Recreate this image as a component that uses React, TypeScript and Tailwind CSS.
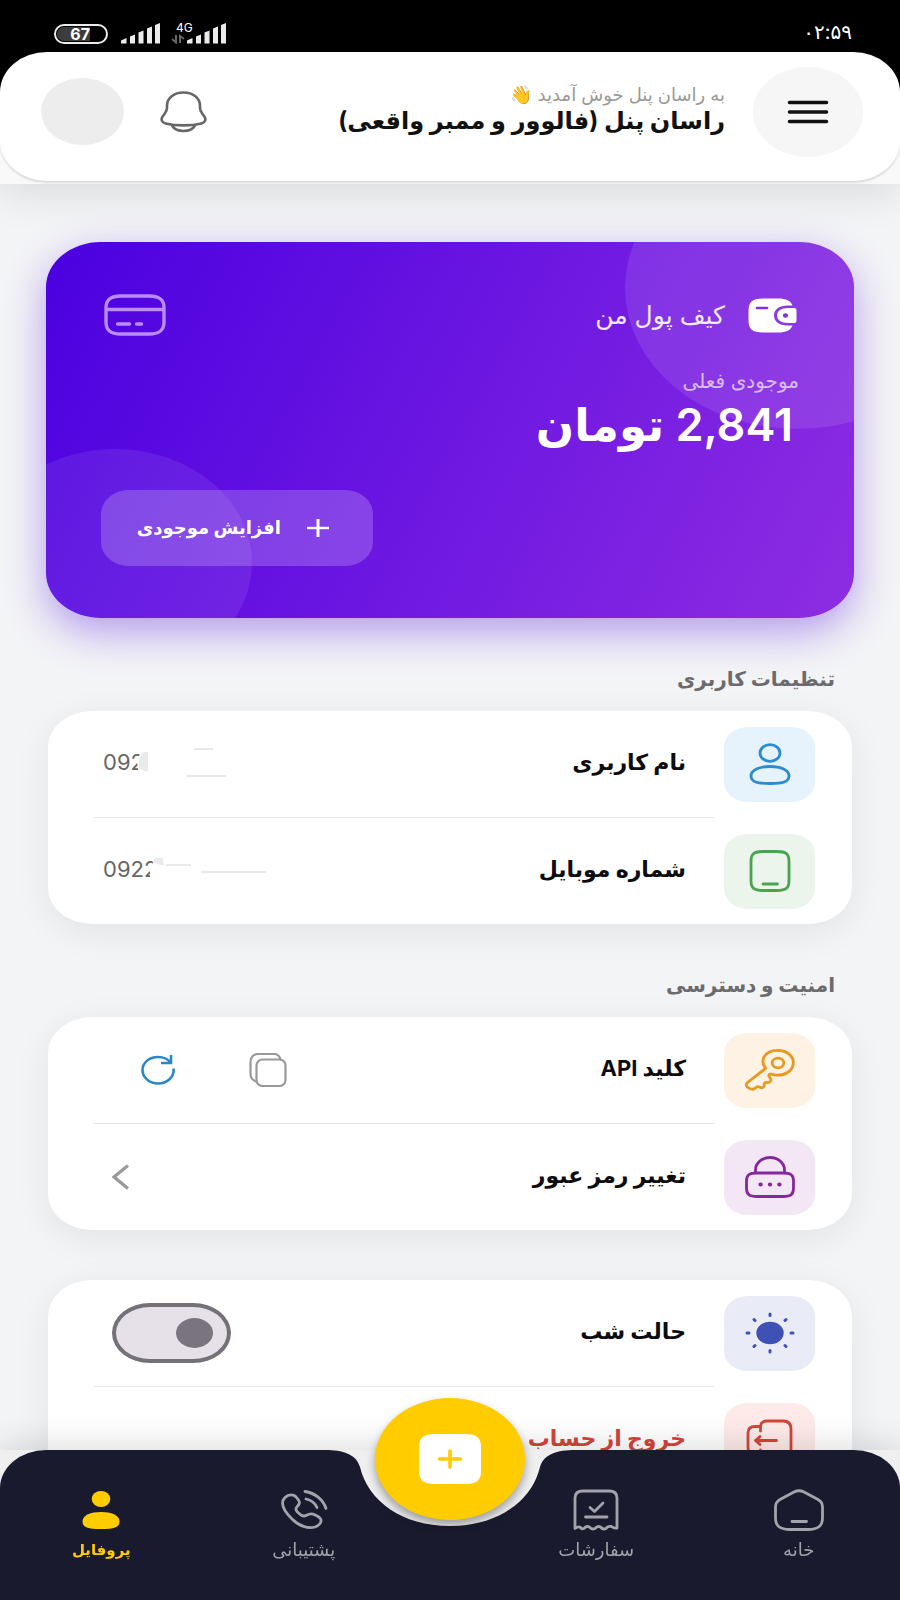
import type { ReactNode } from "react";

const stroke = {
  fill: "none",
  stroke: "currentColor",
  strokeLinecap: "round",
  strokeLinejoin: "round",
} as const;

function SignalBars() {
  return (
    <svg width="40" height="22" viewBox="0 0 40 22" fill="#ececec" aria-hidden="true">
      <path d="M0 18.500L5.500 16V21.500H0ZM9 14.500L14 12.500V21.500H9ZM17.500 10.500L22.500 8.500V21.500H17.500ZM26 6.500L31 4.500V21.500H26ZM34 3L39 1V21.500H34Z" />
    </svg>
  );
}

function StatusBar() {
  return (
    <div className="flex h-[52px] items-end justify-between bg-black px-[48px] pb-[8px] text-white" dir="ltr">
      <div className="flex items-end pl-[6px]">
        <div className="flex h-[20px] w-[54px] items-center rounded-full border-2 border-[#ececec] p-px text-base leading-4 font-bold">
          <span className="flex h-full w-[33px] items-center justify-end rounded-l-full bg-[#3c3c3c]">67</span>
        </div>
        <div className="pl-[13px]">
          <SignalBars />
        </div>
        <div className="ml-[10px] flex w-[16px] flex-col items-start">
          <span className="pl-[5px] text-xs leading-3">4G</span>
          <svg width="14" height="10" viewBox="0 0 14 10" fill="none" stroke="#666" strokeWidth="2" aria-hidden="true">
            <path d="M1 5L5 8.500V1M9 9V2L13 5" />
          </svg>
        </div>
        <SignalBars />
      </div>
      <div className="text-xl leading-6">۰۲:۵۹</div>
    </div>
  );
}

function Header() {
  return (
    <div className="bg-[linear-gradient(#000_50%,#f9f9f9_50%)] pb-[3px] shadow-[0_8px_40px_rgba(0,0,0,0.11)]">
      <header className="flex h-[129px] items-center rounded-[47px_/_40px] bg-white pr-[37px] pb-[10px] pl-[41px] shadow-[0_2px_2px_rgba(0,0,0,0.12)]">
        <button aria-label="منو" className="flex h-[90px] w-[110px] shrink-0 items-center justify-center rounded-[50%] bg-[#f6f6f6] text-[#111]">
          <svg width="42" height="24" viewBox="0 0 42 24" {...stroke} strokeWidth="3.6">
            <path d="M2.500 2.500H39.500M2.500 12H39.500M2.500 21.500H39.500" />
          </svg>
        </button>
        <div className="flex-1 pr-[28px] pb-[6px]">
          <p className="text-lg leading-6 text-[#999]">به راسان پنل خوش آمدید 👋</p>
          <h1 className="text-2xl leading-7 font-bold text-[#111]">راسان پنل (فالوور و ممبر واقعی)</h1>
        </div>
        <button aria-label="اعلان‌ها" className="text-[#666]">
          <svg width="47" height="43" viewBox="0 0 47 43" {...stroke} strokeWidth="2.6">
            <path d="M23.500 2.500C14 2.500 7 8 7 15.500V18C7 20.500 6 22 4.500 24L2.800 26.200C.5 29.200 1.800 32.600 5.500 33.500C16 36 31 36 41.500 33.500C45.200 32.600 46.500 29.200 44.200 26.200L42.500 24C41 22 40 20.500 40 18V15.500C40 8 33 2.500 23.500 2.500Z" />
            <path d="M12 35.500C14 39 19 41 23.500 41S33 39 35 35.500" />
          </svg>
        </button>
        <div className="mr-[36px] h-[67px] w-[83px] rounded-[50%] bg-[#ededed]" />
      </header>
    </div>
  );
}

function WalletCard() {
  return (
    <section className="relative mx-[46px] mt-[58px] rounded-[55px_/_45px] bg-[linear-gradient(118deg,#4a00e0,#8e2de2)] text-white shadow-[0_14px_40px_rgba(94,30,225,0.42)]">
      <div className="absolute inset-0 overflow-hidden rounded-[55px_/_45px]">
        <div className="absolute -top-[95px] -right-[115px] h-[282px] w-[344px] rounded-[50%] bg-white/10" />
        <div className="absolute -bottom-[59px] -left-[68px] h-[228px] w-[274px] rounded-[50%] bg-white/8" />
      </div>
      <div className="relative flex flex-col px-[55px] pt-[50px] pb-[52px]">
        <div className="flex h-[46px] items-center pr-[2px] pl-[3px]">
          <svg width="49" height="35" viewBox="0 0 49 35" aria-hidden="true">
            <path fill="#fff" d="M15 .5H30C38 .5 43 3 44.500 7.500H40C31 7.500 26 11.500 26 17.500S31 27.500 40 27.500H44.500C43 32 38 34.500 30 34.500H15C4 34.500 .5 31 .5 22V13C.5 4 4 .5 15 .5Z" />
            <path fill="#fff" d="M40 10H46C48 10 48.500 11 48.500 13V22C48.500 24 48 25 46 25H40C33 25 29 22 29 17.500S33 10 40 10Z" />
            <path stroke="#8232e2" strokeWidth="2.600" strokeLinecap="round" d="M9 10H19" />
            <ellipse cx="37.500" cy="17.500" rx="2.600" ry="2.200" fill="#8232e2" />
          </svg>
          <h2 className="flex-1 pr-[23px] text-[25px] leading-9 text-white/90">کیف پول من</h2>
          <svg width="62" height="42" viewBox="0 0 62 42" className="text-[#b98cff]" {...stroke} strokeWidth="3.400" aria-hidden="true">
            <path d="M17 2H45C56 2 60 6 60 14V28C60 36 56 40 45 40H17C6 40 2 36 2 28V14C2 6 6 2 17 2ZM2 15.500H60M13.500 30H25.500M32.500 30H37.500" />
          </svg>
        </div>
        <p className="mt-[29px] text-xl leading-7 text-white/65">موجودی فعلی</p>
        <p className="pr-[6px] text-[45px] leading-[60px] font-semibold">2,841 تومان</p>
        <button className="mt-[35px] flex h-[76px] w-[272px] items-center gap-[26px] self-end rounded-[28px_/_24px] bg-white/20 pr-[44px] text-lg font-bold">
          <svg width="22" height="18" viewBox="0 0 22 18" stroke="currentColor" aria-hidden="true">
            <path strokeWidth="2.400" d="M0 9H22" />
            <path strokeWidth="3" d="M11 0V18" />
          </svg>
          افزایش موجودی
        </button>
      </div>
    </section>
  );
}

function SectionTitle({ children }: { children: ReactNode }) {
  return <h2 className="mx-[65px] mt-[45px] mb-[16px] text-xl leading-8 font-bold text-[#6b6b6e]">{children}</h2>;
}

function Panel({ children, className = "" }: { children: ReactNode; className?: string }) {
  return (
    <section className={`mx-[48px] rounded-[44px_/_36px] bg-white shadow-[0_8px_36px_rgba(0,0,0,0.07)] ${className}`}>
      {children}
    </section>
  );
}

function Divider() {
  return <div className="mr-[138px] ml-[46px] h-px bg-[#e6e6e7]" />;
}

interface RowProps {
  icon: ReactNode;
  tile: string;
  label: string;
  labelColor?: string;
  children?: ReactNode;
}

function Row({ icon, tile, label, labelColor = "text-[#0c0c0e]", children }: RowProps) {
  return (
    <div className="flex h-[106px] items-center pr-[37px] pl-[55px]">
      <div className={`flex h-[75px] w-[91px] shrink-0 items-center justify-center rounded-[24px_/_20px] ${tile}`}>{icon}</div>
      <div className={`flex-1 pr-[38px] pb-[4px] text-[22px] leading-8 font-bold ${labelColor}`}>{label}</div>
      {children}
    </div>
  );
}

function UserIcon() {
  return (
    <svg width="42" height="42" viewBox="0 0 42 42" {...stroke} strokeWidth="2.800">
      <ellipse cx="21" cy="10" rx="10" ry="8.300" />
      <path d="M21 23.500C32 23.500 40 27 40 33C40 39 34 40.500 21 40.500S2 39 2 33C2 27 10 23.500 21 23.500Z" />
    </svg>
  );
}

function TabletIcon() {
  return (
    <svg width="42" height="42" viewBox="0 0 42 42" {...stroke} strokeWidth="2.800">
      <path d="M14 1.500H28C37 1.500 40 4 40 11V31C40 38 37 40.500 28 40.500H14C5 40.500 2 38 2 31V11C2 4 5 1.500 14 1.500ZM14 34H28.500" />
    </svg>
  );
}

function KeyIcon() {
  return (
    <svg width="50" height="42" viewBox="0 0 50 42" {...stroke} strokeWidth="2.800">
      <path d="M20.700 19.300C18 16 17 12 19 8C22 3 28 1.200 34 1.500C43 2 49 8 48.300 14.500C47.500 22 40 26.500 32 26.200C29.500 26.100 27.500 25.600 26 25.200C24 25 23.300 26.300 24.300 27.500L25.500 29.500C27 32 24.500 34 22 33.500C20 33.200 19 34.500 19.300 36C19.500 38.500 17 39.500 15 38.200C13 37 12 37.500 11 38.500C8.500 41 5.500 40.500 3 38.500C.8 37 .8 35 2.500 33.500Z" />
      <ellipse cx="33" cy="14" rx="5.800" ry="4.800" />
    </svg>
  );
}

function LockIcon() {
  return (
    <svg width="50" height="42" viewBox="0 0 50 42" {...stroke} strokeWidth="2.800">
      <path d="M10.500 16.500V14C10.500 7 17 1.500 25 1.500S39.500 7 39.500 14V16.500" />
      <path d="M12 17H38C46 17 48.500 19 48.500 25V32C48.500 38.500 46 40.500 38 40.500H12C4 40.500 1.500 38.500 1.500 32V25C1.500 19 4 17 12 17Z" />
      <path strokeWidth="4.200" d="M15.500 28.500H15.700M24.900 28.500H25.100M34.300 28.500H34.500" />
    </svg>
  );
}

function SunIcon() {
  return (
    <svg width="50" height="42" viewBox="0 0 50 42" {...stroke} strokeWidth="3">
      <ellipse cx="25" cy="21" rx="13.700" ry="11.300" fill="currentColor" stroke="none" />
      <path d="M25 2V3.500M25 38.500V40M2 21H4M46 21H48M9 7.500L10 8.500M40 33.500L41 34.500M41 7.500L40 8.500M10 33.500L9 34.500" />
    </svg>
  );
}

function LogoutIcon() {
  return (
    <svg width="50" height="42" viewBox="0 0 50 42" {...stroke} strokeWidth="2.800">
      <path d="M15.500 12V8C15.500 4 17.500 2 22 2H38C43 2 46 4.500 46 10V32C46 37 43 40 38 40H22C17.500 40 15.500 38 15.500 35V31M15.500 7.500H10C5 7.500 3 10 3 14V29C3 33 5 35 10 35H15.500" />
      <path d="M31.500 21.500H10.500M15 17.500L10.500 21.500L15 25.500" />
    </svg>
  );
}

function NavItem({ label, icon, active = false }: { label: string; icon: ReactNode; active?: boolean }) {
  return (
    <a href="#" className={`flex flex-1 flex-col items-center pt-[39px] leading-8 ${active ? "text-[15px] font-bold text-[#ffcc00]" : "text-lg text-[#a3a3ab]"}`}>
      {icon}
      <span className="mt-[3px]">{label}</span>
    </a>
  );
}

function BottomNav() {
  return (
    <nav className="fixed inset-x-0 bottom-0 h-[150px] bg-[#efefef] font-['DejaVu_Sans',sans-serif] shadow-[0_-6px_30px_rgba(0,0,0,0.13)]">
      <div className="absolute inset-0 flex">
        <div className="flex-1 rounded-tr-[46px_38px] bg-[#1a1a2e]" />
        <svg width="272" height="150" viewBox="0 0 272 150" className="-mx-px shrink-0" fill="#1a1a2e" aria-hidden="true">
          <path d="M0 0H11C29 0 42 4 46 17C54 51 88 76 136 76C184 76 218 51 226 17C230 4 243 0 261 0H272V150H0Z" />
        </svg>
        <div className="flex-1 rounded-tl-[46px_38px] bg-[#1a1a2e]" />
      </div>
      <div className="relative flex h-full">
        <NavItem
          label="خانه"
          icon={
            <svg width="50" height="42" viewBox="0 0 50 42" {...stroke} strokeWidth="2.800">
              <path d="M20 3Q25 .5 30 3L44 10.500Q48.500 13 48.500 18V29C48.500 37 44 40.500 34 40.500H16C6 40.500 1.500 37 1.500 29V18Q1.500 13 6 10.500ZM18 32.500H32.500" />
            </svg>
          }
        />
        <NavItem
          label="سفارشات"
          icon={
            <svg width="46" height="42" viewBox="0 0 46 42" {...stroke} strokeWidth="2.800">
              <path d="M10 2H36Q44 2 44 9V39Q41 39.500 38.500 37.500Q34.500 37 33 39.500Q30 41 27.500 38Q24.500 36.500 22 39.500Q18.500 41 16.500 38Q13 36.500 11 39.500Q8.500 40.500 7 38Q4.500 37.500 2 39.500V9Q2 2 10 2Z" />
              <path d="M17 18.500L21.500 22.500L30 14M12.500 28H34" />
            </svg>
          }
        />
        <div className="w-[90px] shrink-0" />
        <NavItem
          label="پشتیبانی"
          icon={
            <svg width="48" height="42" viewBox="0 0 48 42" {...stroke} strokeWidth="2.800">
              <path d="M5 8.500C8.500 5 14 5 16.500 8.500C18 10.500 19.500 12 19.500 13.500C19.500 15.500 18 16.500 16.800 18C15 20.500 16.500 22 18.500 24C21 26.500 23.500 27.800 26 26.500C28.500 25.200 31 24 34 25.500C37 27 40.500 28 41 31C41.300 33.500 39 36.500 35 38C28 40 19 37 12 30C4 22 -1 14.500 5 8.500Z" />
              <path d="M25 2.500C35 4 43 10.500 46 19.500M26 10C31 11 35 14 37 18.500" />
            </svg>
          }
        />
        <NavItem
          active
          label="پروفایل"
          icon={
            <svg width="38" height="42" viewBox="0 0 38 42" fill="currentColor">
              <ellipse cx="19" cy="10" rx="9.300" ry="8" />
              <path d="M19 23C29 23 37.500 26 37.500 32.500C37.500 38.500 32 40 19 40S.5 38.500 .5 32.500C.5 26 9 23 19 23Z" />
            </svg>
          }
        />
      </div>
      <div className="absolute -top-[52px] left-1/2 -ml-[75px]">
        <button aria-label="سفارش جدید" className="flex h-[122px] w-[150px] items-center justify-center rounded-[50%] bg-[#ffcc00] shadow-[0_5px_10px_rgba(0,0,0,0.35)]">
          <svg width="62" height="50" viewBox="0 0 62 50">
            <path fill="#fff" d="M16 0H46C58 0 62 4 62 13V37C62 46 58 50 46 50H16C4 50 0 46 0 37V13C0 4 4 0 16 0Z" />
            <path stroke="#ffcc00" strokeWidth="3.600" strokeLinecap="round" d="M20.500 25H41.500M31 17V33" />
          </svg>
        </button>
      </div>
    </nav>
  );
}

export default function App() {
  return (
    <div dir="rtl" className="min-h-screen bg-[#f3f4f6] pb-24 font-['Inter','DejaVu_Sans','Noto_Color_Emoji',sans-serif]">
      <StatusBar />
      <Header />
      <main>
        <WalletCard />

        <SectionTitle>تنظیمات کاربری</SectionTitle>
        <Panel>
          <Row label="نام کاربری" tile="bg-[#e6f3fd] text-[#2b8ccf]" icon={<UserIcon />}>
            <div className="relative pb-[4px] text-[22px] leading-8 text-[#666]" dir="ltr">
              092
              <svg width="130" height="40" viewBox="0 0 130 40" className="absolute -top-[3px] left-0" aria-hidden="true">
                <path fill="#fff" d="M39 6L34 18L36 34H60V6Z" />
                <path fill="#e9eaec" d="M45 9V29L36 26V18L38 12L41 9Z" />
                <path stroke="#e9e9ea" strokeWidth="2" d="M91 6H110M83 33H123" />
              </svg>
            </div>
          </Row>
          <Divider />
          <Row label="شماره موبایل" tile="bg-[#ebf5ec] text-[#4ba350]" icon={<TabletIcon />}>
            <div className="relative pb-[4px] text-[22px] leading-8 text-[#666]" dir="ltr">
              0922
              <svg width="170" height="40" viewBox="0 0 170 40" className="absolute -top-[3px] left-0" aria-hidden="true">
                <path fill="#fff" d="M44 17L50 14L50 6H66V34H47V22Z" />
                <path fill="#e9eaec" d="M49 12L52 8H60V12L62 16L54 14Z" />
                <path stroke="#e9e9ea" strokeWidth="2" d="M63 15H88M98 22H163" />
              </svg>
            </div>
          </Row>
        </Panel>

        <SectionTitle>امنیت و دسترسی</SectionTitle>
        <Panel>
          <Row label="کلید API" tile="bg-[#fef2e4] text-[#e59a20]" icon={<KeyIcon />}>
            <button aria-label="کپی" className="flex w-[110px] justify-center text-[#999]">
              <svg width="38" height="34" viewBox="0 0 38 34" {...stroke} strokeWidth="2.200">
                <rect x="7.500" y="6.500" width="29" height="26.500" rx="6" />
                <path d="M7.500 28.500Q1.500 27 1.500 21V9Q1.500 1 10 1H25Q30 1 31.500 6.500" />
              </svg>
            </button>
            <button aria-label="بازسازی" className="flex w-[110px] justify-center text-[#2b86c8]">
              <svg width="34" height="30" viewBox="0 0 34 30" {...stroke} strokeLinecap="butt" strokeLinejoin="miter" strokeWidth="2.600">
                <path d="M32.500 13.500C33.500 22 26 28.500 17 28.500S1.500 22 1.500 15S8 2 17 2C22 2 27 4 30 8M30 0V8H20" />
              </svg>
            </button>
          </Row>
          <Divider />
          <Row label="تغییر رمز عبور" tile="bg-[#f3e7f6] text-[#86289b]" icon={<LockIcon />}>
            <button aria-label="تغییر رمز عبور" className="ml-[9px] text-[#999]">
              <svg width="17" height="26" viewBox="0 0 17 26" fill="none" stroke="currentColor" strokeWidth="3.200">
                <path d="M16 1.500L2 13L16 24.500" />
              </svg>
            </button>
          </Row>
        </Panel>

        <Panel className="mt-[50px]">
          <Row label="حالت شب" tile="bg-[#e9ecf6] text-[#3f51b5]" icon={<SunIcon />}>
            <label className="relative ml-[9px] flex items-center">
              <input
                type="checkbox"
                role="switch"
                aria-label="حالت شب"
                className="h-[60px] w-[119px] appearance-none rounded-[38px_/_30px] border-4 border-[#747178] bg-[#e6e0e9]"
              />
              <span className="pointer-events-none absolute right-[18px] h-[30px] w-[37px] rounded-[50%] bg-[#79747e]" />
            </label>
          </Row>
          <Divider />
          <Row label="خروج از حساب" labelColor="text-[#d3453b]" tile="bg-[#fdeae9] text-[#d3453b]" icon={<LogoutIcon />} />
        </Panel>
      </main>
      <BottomNav />
    </div>
  );
}
